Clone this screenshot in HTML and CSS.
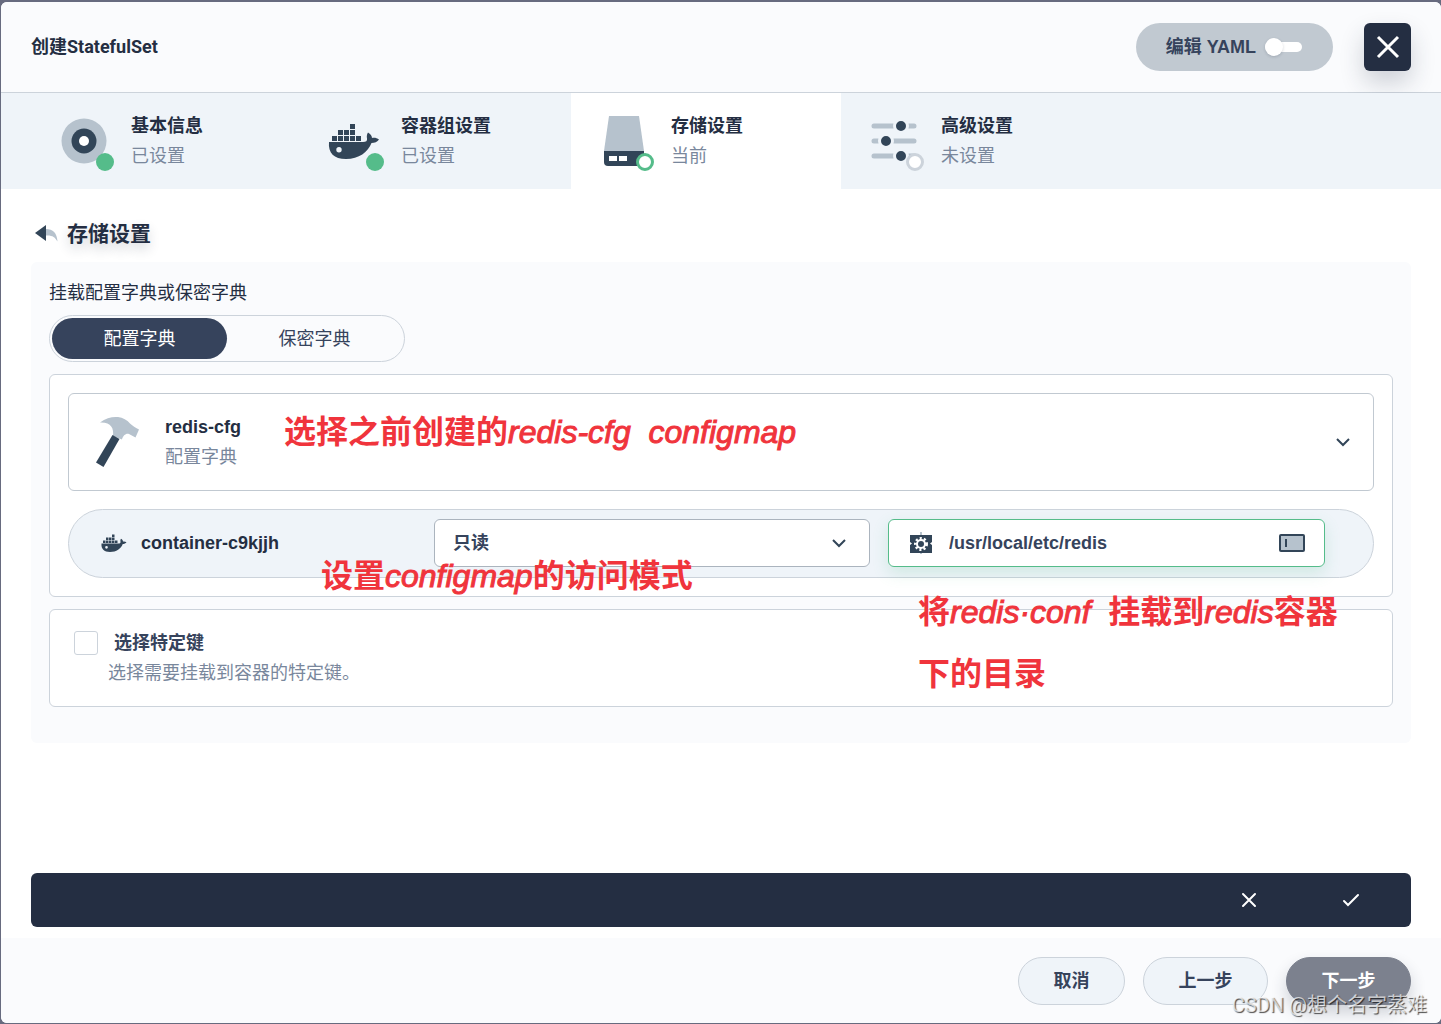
FILE: index.html
```html
<!DOCTYPE html>
<html lang="zh-CN">
<head>
<meta charset="utf-8">
<meta name="viewport" content="width=device-width, initial-scale=1">
<title>创建StatefulSet</title>
<link rel="stylesheet" href="styles.css">
</head>
<body>
<svg class="sprite" aria-hidden="true">
  <symbol id="docker" viewBox="0 0 52 38">
    <path d="M22 1h5v5h-5zM10 7h5v5h-5zM16 7h5v5h-5zM22 7h5v5h-5zM4 13h5v5H4zM10 13h5v5h-5zM16 13h5v5h-5zM22 13h5v5h-5zM28 13h5v5h-5z"/>
    <path fill-rule="evenodd" d="M1 19H35C38 19 39.500 18 39 15.500C38.500 13 39 11 40 9.500C42.500 11 44 13 44 15C46.500 14.500 49 15 51 16.500C49.500 19 46.500 20 43.500 20C40 29 31 36 18 36C6 36 0 30 1 19ZM11 24A2.700 2.700 0 1 0 11 29.400A2.700 2.700 0 1 0 11 24Z"/>
  </symbol>
</svg>

<div class="modal">
  <header class="header">
    <h1 class="header-title">创建StatefulSet</h1>
    <label class="yaml-switch">
      <span>编辑 YAML</span>
      <input type="checkbox" role="switch">
    </label>
    <button class="close" type="button" aria-label="关闭">
      <svg width="24" height="24" viewBox="0 0 24 24"><path d="M2 2L22 22M22 2L2 22"/></svg>
    </button>
  </header>

  <nav class="steps">
    <a class="step" href="#basic">
      <svg class="step-icon" viewBox="0 0 60 60">
        <circle class="light" cx="29" cy="30" r="22.500"/><circle class="dark" cx="29" cy="30" r="12.500"/><circle class="white" cx="29" cy="30" r="5"/>
        <circle class="green" cx="50" cy="51" r="9"/>
      </svg>
      <span class="step-text"><strong>基本信息</strong><small>已设置</small></span>
    </a>
    <a class="step" href="#pods">
      <svg class="step-icon" viewBox="0 0 60 60">
        <use class="dark" href="#docker" x="3" y="12" width="52" height="38"/>
        <circle class="green" cx="50" cy="51" r="9"/>
      </svg>
      <span class="step-text"><strong>容器组设置</strong><small>已设置</small></span>
    </a>
    <a class="step step-current" href="#storage" aria-current="step">
      <svg class="step-icon" viewBox="0 0 60 60">
        <path class="light" d="M14 5H44L49 40H9Z"/>
        <path class="dark" d="M9 40H49V55H13Q9 55 9 51Z"/>
        <path class="white" d="M14 45h8v5h-8zM24 45h8v5h-8z"/>
        <circle class="ring-green" cx="50" cy="51" r="7.500"/>
      </svg>
      <span class="step-text"><strong>存储设置</strong><small>当前</small></span>
    </a>
    <a class="step" href="#advanced">
      <svg class="step-icon" viewBox="0 0 60 60">
        <path class="tracks" d="M9 15H49M9 30H49M9 45H49"/>
        <g class="knobs"><circle cx="36" cy="15" r="6.500"/><circle cx="21" cy="30" r="6.500"/><circle cx="36" cy="45" r="6.500"/></g>
        <circle class="ring-grey" cx="50" cy="51" r="7.500"/>
      </svg>
      <span class="step-text"><strong>高级设置</strong><small>未设置</small></span>
    </a>
  </nav>

  <main class="content">
    <div class="section-head">
      <a href="#back" aria-label="返回">
        <svg width="24" height="20" viewBox="0 0 24 20"><path class="light" d="M11 5C18 5 22 9 22.500 17.500C20 13 17 11 11 11.500Z"/><path class="dark" d="M0 9L11 1V17Z"/></svg>
      </a>
      <h2>存储设置</h2>
    </div>

    <section class="panel">
      <p class="panel-label">挂载配置字典或保密字典</p>
      <div class="toggle">
        <button class="toggle-item toggle-active" type="button">配置字典</button>
        <button class="toggle-item" type="button">保密字典</button>
      </div>

      <div class="card">
        <button class="config" type="button">
          <svg width="60" height="60" viewBox="0 0 60 60">
            <path class="light" d="M11 10.500C17 6 23 4.500 29 5C34 5.500 38 8 41 11.500C43 13.500 47 16 50 17.500L46.500 25.500L40 22C37 21 34 23.500 33 27.500L24 24C25 16 22 10 11 10.500Z"/>
            <path class="dark" d="M23.500 23L30.500 27L14.500 55L7 50.500Z"/>
          </svg>
          <span class="config-text"><strong>redis-cfg</strong><small>配置字典</small></span>
          <svg class="chevron" width="18" height="18" viewBox="0 0 18 18"><path d="M3 6L9 12L15 6"/></svg>
        </button>
        <div class="mount">
          <div class="mount-name">
            <svg class="dark" width="26" height="19"><use href="#docker" width="26" height="19"/></svg>
            <strong>container-c9kjjh</strong>
          </div>
          <div class="select">
            <select aria-label="访问模式"><option>只读</option><option>读写</option></select>
            <svg class="chevron" width="18" height="18" viewBox="0 0 18 18"><path d="M3 6L9 12L15 6"/></svg>
          </div>
          <div class="path">
            <svg width="24" height="24" viewBox="0 0 24 24">
              <path class="light" d="M11 1h2v22h-2z"/>
              <path class="dark" d="M1 4H23V11L21 12.500L23 14V22H1V14L3 12.500L1 11Z"/>
              <circle class="gear-teeth" cx="12" cy="13" r="5.500"/><circle class="gear-ring" cx="12" cy="13" r="4"/>
            </svg>
            <input type="text" value="/usr/local/etc/redis" aria-label="挂载路径">
            <button type="button" aria-label="子路径">
              <svg width="26" height="18" viewBox="0 0 26 18"><rect class="dark" width="26" height="18" rx="2"/><rect class="light" x="2" y="2" width="22" height="14"/><path class="dark" d="M6 5h2v8H6z"/></svg>
            </button>
          </div>
        </div>
      </div>

      <div class="card card-keys">
        <input type="checkbox" id="keys">
        <div>
          <label for="keys">选择特定键</label>
          <p>选择需要挂载到容器的特定键。</p>
        </div>
      </div>
    </section>

    <div class="confirm">
      <button type="button" aria-label="取消编辑"><svg width="18" height="18" viewBox="0 0 18 18"><path d="M3 3L15 15M15 3L3 15"/></svg></button>
      <button type="button" aria-label="确认编辑"><svg width="18" height="18" viewBox="0 0 18 18"><path d="M2 10L6 14L16 4"/></svg></button>
    </div>
  </main>

  <footer class="footer">
    <button class="button" type="button">取消</button>
    <button class="button button-wide" type="button">上一步</button>
    <button class="button button-wide button-next" type="button">下一步</button>
  </footer>

  <p class="note note-config">选择之前创建的<em>redis-cfg&nbsp; configmap</em></p>
  <p class="note note-mode">设置<em>configmap</em>的访问模式</p>
  <p class="note note-path">将<em>redis·conf</em>&nbsp; 挂载到<em>redis</em>容器<br>下的目录</p>
  <p class="watermark">CSDN @想个名字蒸难</p>
</div>
</body>
</html>
```
FILE: styles.css
```css
* { box-sizing: border-box; }

body {
  display: flex;
  min-height: 100vh;
  margin: 0;
  padding: 2px 0 1px 1px;
  background: #676b7f;
  color: #242e42;
  font: 18px/30px "Liberation Sans", "Noto Sans CJK SC", sans-serif;
}

h1, h2, p { margin: 0; }
button, input, select { margin: 0; font: inherit; color: inherit; }
button { padding: 0; border: 0; background: none; cursor: pointer; }
a { color: inherit; text-decoration: none; }
svg { display: block; flex: none; }
small { color: #79879c; font-size: 18px; }
path { stroke-linecap: round; }

.sprite { position: absolute; width: 0; height: 0; }
.dark { fill: #324558; }
.light { fill: #b6c2cd; }
.white { fill: #fff; }
.green { fill: #55bc8a; }

.modal {
  position: relative;
  display: flex;
  flex: 1;
  flex-direction: column;
  min-width: 0;
  border-radius: 6px;
  background: #fff;
}

.header {
  display: flex;
  align-items: center;
  gap: 31px;
  height: 91px;
  padding: 0 30px;
  border-bottom: 1px solid #ccd3db;
  border-radius: 6px 6px 0 0;
  background: #fafbfd;
}
.header-title { flex: 1; font: bold 18px/30px Roboto, "Noto Sans CJK SC", sans-serif; }
.yaml-switch {
  display: flex;
  align-items: center;
  gap: 9px;
  height: 48px;
  padding: 0 31px 0 30px;
  border-radius: 24px;
  background: #c1c9d1;
  color: #36435c;
  font-weight: bold;
}
.yaml-switch input {
  appearance: none;
  display: flex;
  align-items: center;
  width: 37px;
  height: 10px;
  border-radius: 5px;
  background: #fff;
}
.yaml-switch input::before {
  content: "";
  width: 18px;
  height: 18px;
  border-radius: 50%;
  background: #fff;
  box-shadow: 0 1px 3px rgba(36, 46, 66, 0.2);
}
.close {
  display: grid;
  place-items: center;
  width: 47px;
  height: 48px;
  border-radius: 6px;
  background: #242e42;
  box-shadow: 0 12px 24px rgba(36, 46, 66, 0.2);
}
.close path { stroke: #fff; stroke-width: 3; stroke-linecap: butt; }

.steps { display: flex; padding: 0 30px; background: #eff4f9; }
.step {
  display: flex;
  align-items: center;
  gap: 16px;
  width: 270px;
  height: 96px;
  padding-left: 24px;
}
.step-current { background: #fff; }
.step-icon { width: 60px; height: 60px; }
.step-text, .config-text { display: flex; flex-direction: column; text-align: left; }
.ring-green { fill: #fff; stroke: #55bc8a; stroke-width: 3; }
.ring-grey { fill: #fff; stroke: #ccd3db; stroke-width: 3; }
.tracks { stroke: #b6c2cd; stroke-width: 5; }
.knobs { fill: #324558; stroke: #eff4f9; stroke-width: 3; }

.content { display: flex; flex: 1; flex-direction: column; padding: 30px 30px 11px; }
.section-head { display: flex; align-items: center; gap: 8px; padding-left: 4px; }
.section-head h2 { font-size: 21px; line-height: 30px; text-shadow: 0 6px 12px rgba(36, 46, 66, 0.2); }

.panel {
  margin: 13px 0 30px;
  padding: 16px 18px 36px;
  border-radius: 6px;
  background: #fafbfd;
}
.panel-label { margin-bottom: 7px; }
.toggle {
  display: inline-flex;
  padding: 2px;
  border: 1px solid #ccd3db;
  border-radius: 24px;
  vertical-align: top;
}
.toggle-item { width: 175px; height: 41px; border-radius: 21px; color: #36435c; }
.toggle-active { background: #36435c; color: #fff; }

.card {
  margin-top: 12px;
  padding: 18px;
  border: 1px solid #ccd3db;
  border-radius: 6px;
  background: #fff;
}
.config {
  display: flex;
  align-items: center;
  gap: 16px;
  width: 100%;
  height: 98px;
  padding: 0 21px 0 20px;
  border: 1px solid #c1c9d1;
  border-radius: 6px;
}
.config-text { flex: 1; }
.chevron path { fill: none; stroke: #324558; stroke-width: 2; stroke-linecap: butt; }

.mount {
  display: grid;
  grid-template-columns: 315fr 436fr 437fr;
  gap: 18px;
  margin-top: 18px;
  padding: 9px 48px 10px 32px;
  border: 1px solid #ccd3db;
  border-radius: 35px;
  background: #eff4f9;
}
.mount-name { display: flex; align-items: center; gap: 14px; }
.select { display: grid; align-items: center; }
.select select, .select .chevron { grid-area: 1 / 1; }
.select select {
  appearance: none;
  width: 100%;
  height: 48px;
  padding: 0 18px;
  border: 1px solid #abb4be;
  border-radius: 6px;
  background: #fff;
  color: #36435c;
  font-weight: bold;
}
.select .chevron { justify-self: end; margin-right: 22px; pointer-events: none; }
.path {
  display: flex;
  align-items: center;
  gap: 16px;
  height: 48px;
  padding: 0 19px 0 20px;
  border: 1px solid #55bc8a;
  border-radius: 6px;
  background: #fff;
  box-shadow: 0 6px 16px rgba(85, 188, 138, 0.2);
}
.path input {
  flex: 1;
  min-width: 0;
  padding: 0;
  border: 0;
  outline: 0;
  background: none;
  color: #36435c;
  font-weight: bold;
}
.gear-teeth { fill: none; stroke: #fff; stroke-width: 3; stroke-dasharray: 2 2; }
.gear-ring { fill: none; stroke: #fff; stroke-width: 2; }

.card-keys { display: flex; padding-left: 24px; }
.card-keys input {
  appearance: none;
  width: 24px;
  height: 24px;
  margin-top: 3px;
  border: 1px solid #ccd3db;
  border-radius: 3px;
  background: #fff;
}
.card-keys label { display: block; padding-left: 16px; color: #36435c; font-weight: bold; }
.card-keys p { padding-left: 10px; color: #79879c; }

.confirm {
  display: flex;
  justify-content: flex-end;
  margin-top: auto;
  padding-right: 9px;
  border-radius: 6px;
  background: #242e42;
}
.confirm button { display: grid; place-items: center; width: 102px; height: 54px; }
.confirm path { fill: none; stroke: #fff; stroke-width: 2; }

.footer {
  display: flex;
  justify-content: flex-end;
  gap: 18px;
  padding: 19px 30px 18px;
  border-radius: 0 0 6px 6px;
  background: #fafbfd;
}
.button {
  width: 107px;
  height: 48px;
  border: 1px solid #ccd3db;
  border-radius: 24px;
  background: #eff4f9;
  color: #36435c;
  font-weight: bold;
}
.button-wide { width: 125px; }
.button-next {
  border-color: #7c818e;
  background: #7c818e;
  box-shadow: 0 8px 16px rgba(36, 46, 66, 0.2);
  color: #fff;
}

/* Hand-placed tutorial notes laid over the dialog */
.note {
  position: absolute;
  color: #f0343c;
  font-size: 32px;
  font-weight: bold;
  line-height: 62px;
  white-space: nowrap;
  pointer-events: none;
}
.note em { font-weight: normal; -webkit-text-stroke: 1px #f0343c; }
.note-config { left: 283px; top: 399px; }
.note-mode { left: 320px; top: 543px; }
.note-path { left: 917px; top: 579px; }

.watermark {
  position: absolute;
  right: 14px;
  bottom: 3px;
  color: rgba(255, 255, 255, 0.7);
  font: 20px/30px Roboto, "Noto Sans CJK SC", sans-serif;
  text-shadow: 1px 1px 1px rgba(0, 0, 0, 0.7);
  white-space: nowrap;
  pointer-events: none;
}
```
